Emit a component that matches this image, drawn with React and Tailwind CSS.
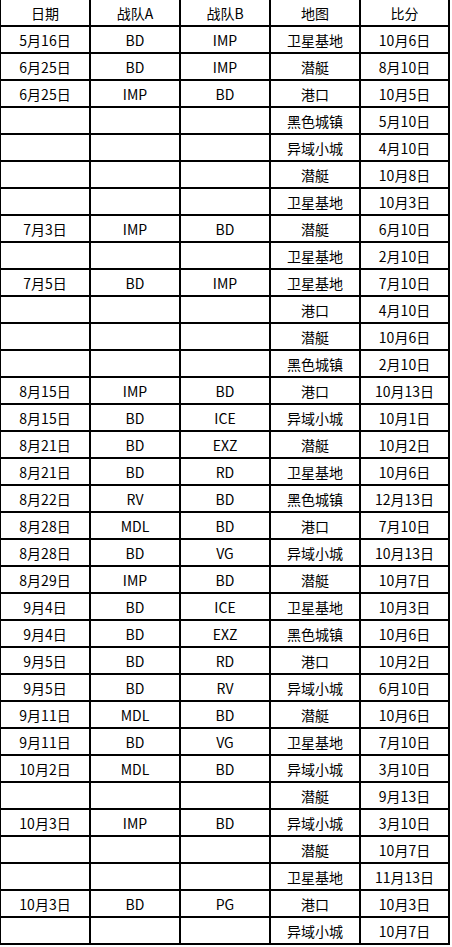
import React from 'react';

const head = ['日期', '战队A', '战队B', '地图', '比分'];

const rows = [
  ['5月16日', 'BD', 'IMP', '卫星基地', '10月6日'],
  ['6月25日', 'BD', 'IMP', '潜艇', '8月10日'],
  ['6月25日', 'IMP', 'BD', '港口', '10月5日'],
  ['', '', '', '黑色城镇', '5月10日'],
  ['', '', '', '异域小城', '4月10日'],
  ['', '', '', '潜艇', '10月8日'],
  ['', '', '', '卫星基地', '10月3日'],
  ['7月3日', 'IMP', 'BD', '潜艇', '6月10日'],
  ['', '', '', '卫星基地', '2月10日'],
  ['7月5日', 'BD', 'IMP', '卫星基地', '7月10日'],
  ['', '', '', '港口', '4月10日'],
  ['', '', '', '潜艇', '10月6日'],
  ['', '', '', '黑色城镇', '2月10日'],
  ['8月15日', 'IMP', 'BD', '港口', '10月13日'],
  ['8月15日', 'BD', 'ICE', '异域小城', '10月1日'],
  ['8月21日', 'BD', 'EXZ', '潜艇', '10月2日'],
  ['8月21日', 'BD', 'RD', '卫星基地', '10月6日'],
  ['8月22日', 'RV', 'BD', '黑色城镇', '12月13日'],
  ['8月28日', 'MDL', 'BD', '港口', '7月10日'],
  ['8月28日', 'BD', 'VG', '异域小城', '10月13日'],
  ['8月29日', 'IMP', 'BD', '潜艇', '10月7日'],
  ['9月4日', 'BD', 'ICE', '卫星基地', '10月3日'],
  ['9月4日', 'BD', 'EXZ', '黑色城镇', '10月6日'],
  ['9月5日', 'BD', 'RD', '港口', '10月2日'],
  ['9月5日', 'BD', 'RV', '异域小城', '6月10日'],
  ['9月11日', 'MDL', 'BD', '潜艇', '10月6日'],
  ['9月11日', 'BD', 'VG', '卫星基地', '7月10日'],
  ['10月2日', 'MDL', 'BD', '异域小城', '3月10日'],
  ['', '', '', '潜艇', '9月13日'],
  ['10月3日', 'IMP', 'BD', '异域小城', '3月10日'],
  ['', '', '', '潜艇', '10月7日'],
  ['', '', '', '卫星基地', '11月13日'],
  ['10月3日', 'BD', 'PG', '港口', '10月3日'],
  ['', '', '', '异域小城', '10月7日'],
];

const Cell = ({ text }) => (
  <div className="bg-white h-[25px] flex items-center justify-center text-[14px] text-black leading-none">
    {text}
  </div>
);

const App = () => {
  return (
    <div className="w-[452px] h-[947px] bg-white font-['Noto_Sans_CJK_SC',sans-serif]">
      <div className="w-[450px] bg-black grid grid-cols-[88px_88px_88px_88px_87px] gap-[2px] pl-px pr-[2px] pb-[2px]">
        {head.map((h, i) => (
          <Cell key={'h' + i} text={h} />
        ))}
        {rows.map((r, i) =>
          r.map((c, j) => <Cell key={i + '-' + j} text={c} />)
        )}
      </div>
    </div>
  );
};

export default App;
